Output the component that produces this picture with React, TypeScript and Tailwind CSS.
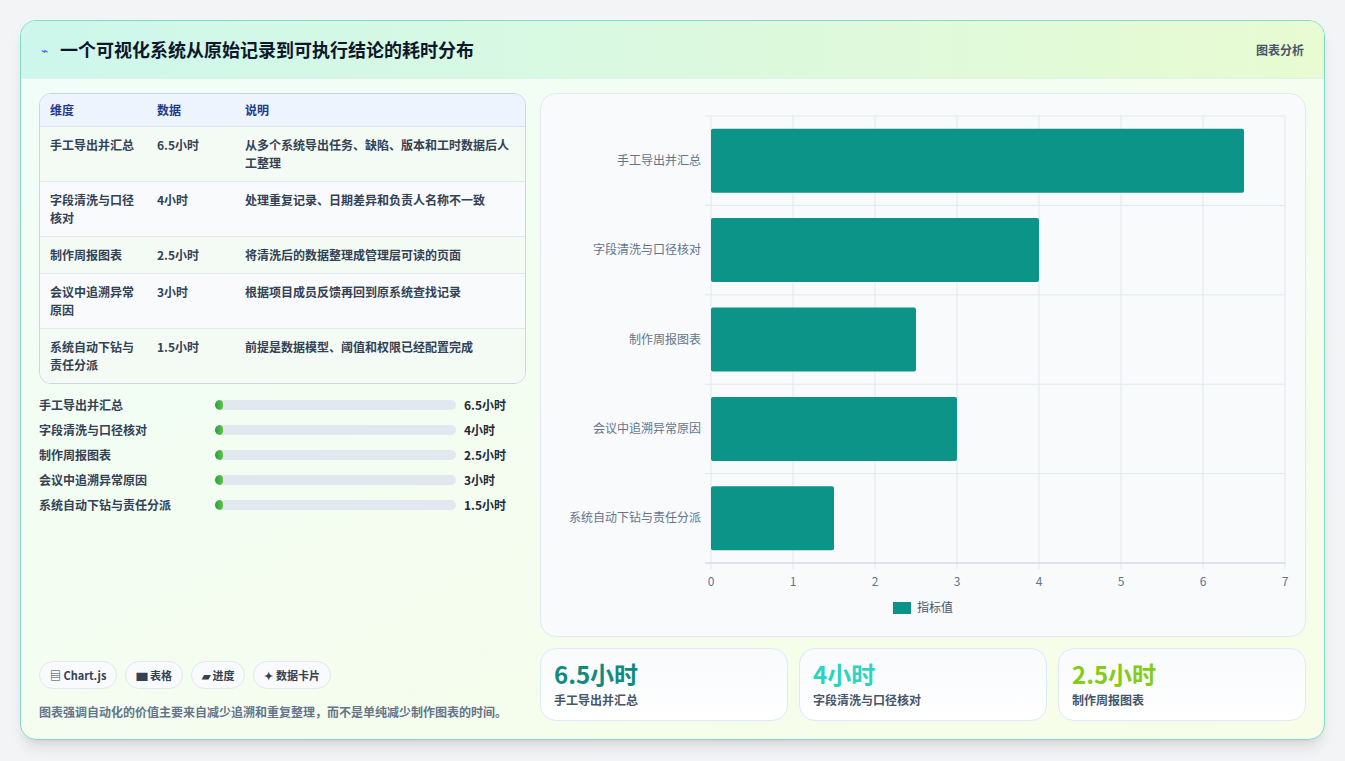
import React from "react";

const rows = [
  ["手工导出并汇总", "6.5小时", "从多个系统导出任务、缺陷、版本和工时数据后人工整理", 6.5],
  ["字段清洗与口径核对", "4小时", "处理重复记录、日期差异和负责人名称不一致", 4],
  ["制作周报图表", "2.5小时", "将清洗后的数据整理成管理层可读的页面", 2.5],
  ["会议中追溯异常原因", "3小时", "根据项目成员反馈再回到原系统查找记录", 3],
  ["系统自动下钻与责任分派", "1.5小时", "前提是数据模型、阈值和权限已经配置完成", 1.5],
] as const;

const font = { fontFamily: '"Noto Sans CJK SC", "Noto Sans", sans-serif' };

function Chart() {
  const x0 = 170, x1 = 744, y0 = 22, y1 = 469;
  const unit = (x1 - x0) / 7;
  const band = (y1 - y0) / 5;
  return (
    <svg width="764" height="543" viewBox="0 0 764 543" style={font}>
      {Array.from({ length: 8 }).map((_, k) => (
        <line key={k} x1={x0 + unit * k} x2={x0 + unit * k} y1={y0} y2={y1 + 6} stroke="#e2e8f0" />
      ))}
      {Array.from({ length: 6 }).map((_, k) => (
        <line key={k} x1={x0 - 6} x2={x1} y1={y0 + band * k} y2={y0 + band * k} stroke="#e2e8f0" />
      ))}
      <line x1={x0 - 6} x2={x1} y1={y1} y2={y1} stroke="#cbd5e1" />
      {rows.map((r, i) => {
        const top = y0 + band * i + 12.7;
        return (
          <g key={i}>
            <rect x={x0} y={top} width={unit * (r[3] as number)} height={64} rx={2} fill="#0d9488" />
            <text x={160} y={top + 36} textAnchor="end" fontSize="12" fill="#64748b">{r[0]}</text>
          </g>
        );
      })}
      {Array.from({ length: 8 }).map((_, k) => (
        <text key={k} x={x0 + unit * k} y={492} textAnchor="middle" fontSize="12" fill="#64748b">{k}</text>
      ))}
      <rect x={352} y={508} width={18} height={12} fill="#0d9488" />
      <text x={376} y={518} fontSize="12" fill="#475569">指标值</text>
    </svg>
  );
}

export default function App() {
  return (
    <div className="min-h-screen bg-[#f3f4f6] p-5" style={font}>
      <div className="w-[1305px] h-[720px] rounded-2xl border border-[#7fdcc8] overflow-hidden shadow-lg bg-gradient-to-br from-[#f0fdf9] to-[#f7fde6] flex flex-col">
        <div className="h-[58px] shrink-0 flex items-center justify-between px-5 bg-gradient-to-r from-[#cdf7ec] to-[#e8fbd2] border-b border-[#e0f2ec]">
          <div className="flex items-center gap-3">
            <span className="text-[#2563eb] text-[12px]">⌁</span>
            <span className="text-[18px] font-bold text-[#0f172a]">一个可视化系统从原始记录到可执行结论的耗时分布</span>
          </div>
          <span className="text-[12px] font-semibold text-[#475569]">图表分析</span>
        </div>
        <div className="flex-1 flex gap-[14px] px-[18px] pt-[14px] pb-[19px]">
          <div className="w-[490px] flex flex-col">
            <div className="rounded-xl border border-[#cbd5e1] overflow-hidden bg-[#f8fafc] text-[12px]">
              <div className="flex h-[33px] items-center bg-[#edf4fd] border-b border-[#dbe3ee] font-semibold text-[#1e3a8a]">
                <div className="w-[117px] pl-[10px]">维度</div>
                <div className="w-[88px]">数据</div>
                <div>说明</div>
              </div>
              {rows.map((r, i) => (
                <div key={i} className={`flex py-[9px] leading-[18px] font-semibold text-[#334155] ${i < 4 ? "border-b border-[#e2e8f0]" : ""} ${i % 2 === 0 ? "bg-[#f3fbf4]" : "bg-[#f8fafc]"}`}>
                  <div className="w-[117px] pl-[10px] pr-[14px]">{r[0]}</div>
                  <div className="w-[88px]">{r[1]}</div>
                  <div className="flex-1 pr-2">{r[2]}</div>
                </div>
              ))}
            </div>
            <div className="mt-[12px] flex flex-col gap-[7px]">
              {rows.map((r, i) => (
                <div key={i} className="flex items-center h-[18px] text-[12px] font-semibold text-[#334155]">
                  <div className="w-[176px]">{r[0]}</div>
                  <div className="w-[241px] h-[10px] rounded-full bg-[#e2e8f0] overflow-hidden">
                    <div className="w-[8px] h-full rounded-full bg-gradient-to-r from-[#16a34a] to-[#65c23a]" />
                  </div>
                  <div className="ml-[8px] font-bold text-[#1e293b]">{r[1]}</div>
                </div>
              ))}
            </div>
            <div className="mt-auto flex gap-[8px]">
              {["▤ Chart.js", "▆ 表格", "▰ 进度", "✦ 数据卡片"].map((c) => (
                <span key={c} className="h-[28px] px-[10px] flex items-center rounded-full border border-[#e2e8f0] bg-[#f8fafc] text-[11px] font-semibold text-[#334155]">{c}</span>
              ))}
            </div>
            <p className="mt-[13px] text-[12px] leading-[19px] font-semibold text-[#64748b]">图表强调自动化的价值主要来自减少追溯和重复整理，而不是单纯减少制作图表的时间。</p>
          </div>
          <div className="flex-1 flex flex-col gap-[11px]">
            <div className="h-[544px] rounded-2xl border border-[#e2e8f0] bg-[#f8fafc] overflow-hidden">
              <Chart />
            </div>
            <div className="flex gap-[11px]">
              {[["6.5小时", "手工导出并汇总", "text-[#0f8a7e]"], ["4小时", "字段清洗与口径核对", "text-[#2dd4bf]"], ["2.5小时", "制作周报图表", "text-[#84cc16]"]].map(([v, l, c]) => (
                <div key={l} className="flex-1 h-[73px] rounded-2xl border border-[#dbeafe] bg-gradient-to-b from-[#f8fafc] to-white px-[13px] pt-[10px]">
                  <div className={`text-[24px] font-bold leading-[30px] ${c}`}>{v}</div>
                  <div className="text-[12px] font-semibold text-[#475569] mt-[2px]">{l}</div>
                </div>
              ))}
            </div>
          </div>
        </div>
      </div>
    </div>
  );
}
